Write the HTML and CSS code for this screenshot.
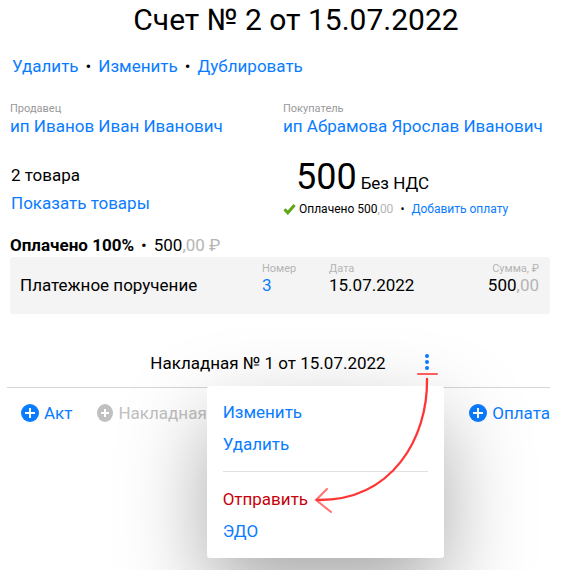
FILE: index.html
```
<!DOCTYPE html>
<html lang="ru">
<head>
<meta charset="UTF-8">
<meta name="viewport" content="width=device-width, initial-scale=1">
<title>Счет № 2 от 15.07.2022</title>
<link rel="stylesheet" href="styles.css">
</head>
<body>

<main class="invoice">
    <h1>Счет № 2 от 15.07.2022</h1>

    <nav class="actions">
        <a href="#">Удалить</a>
        <span>•</span>
        <a href="#">Изменить</a>
        <span>•</span>
        <a href="#">Дублировать</a>
    </nav>

    <section class="columns parties">
        <div>
            <div class="label">Продавец</div>
            <a href="#">ип Иванов Иван Иванович</a>
        </div>
        <div>
            <div class="label">Покупатель</div>
            <a href="#">ип Абрамова Ярослав Иванович</a>
        </div>
    </section>

    <section class="columns summary">
        <div class="goods">
            <div>2 товара</div>
            <a href="#">Показать товары</a>
        </div>
        <div>
            <div class="total">500 <span class="vat">Без НДС</span></div>
            <div class="status">
                <svg class="check" viewBox="0 0 13 12" aria-hidden="true">
                    <path d="M1.5 6.2l3.3 3.6L11.6 2" fill="none" stroke="#5fa614" stroke-width="3"/>
                </svg>
                <span>Оплачено 500<span class="muted">,00</span></span>
                <span class="dot">•</span>
                <a href="#">Добавить оплату</a>
            </div>
        </div>
    </section>

    <!-- Payments -->
    <div class="paid">
        <b>Оплачено 100%</b>
        <span>•</span>
        <span>500<span class="muted">,00 ₽</span></span>
    </div>
    <table class="payments">
        <thead>
            <tr>
                <td></td>
                <th class="number">Номер</th>
                <th>Дата</th>
                <th class="right">Сумма, ₽</th>
            </tr>
        </thead>
        <tbody>
            <tr>
                <td>Платежное поручение</td>
                <td><a href="#">3</a></td>
                <td>15.07.2022</td>
                <td class="right">500<span class="muted">,00</span></td>
            </tr>
        </tbody>
    </table>

    <!-- Waybill with an open menu -->
    <section class="waybill">
        <div class="waybill-head">
            <span>Накладная № 1 от 15.07.2022</span>
            <div class="menu-wrap">
                <button class="kebab" type="button" aria-label="Меню" aria-expanded="true">
                    <svg viewBox="0 0 4 16"><circle cx="2" cy="2" r="2"/><circle cx="2" cy="8" r="2"/><circle cx="2" cy="14" r="2"/></svg>
                </button>
                <div class="menu">
                    <a href="#">Изменить</a>
                    <a href="#">Удалить</a>
                    <hr>
                    <a href="#" class="send">Отправить</a>
                    <a href="#">ЭДО</a>
                </div>
                <svg class="arrow" viewBox="0 0 128 144" aria-hidden="true">
                    <path d="M105 3H124" stroke-width="2" opacity=".8"/>
                    <path d="M114 8C115 66 80 130 4 129" stroke-width="2.3"/>
                    <path d="M14 118L3 129L18 141" stroke-width="2" opacity=".7"/>
                </svg>
            </div>
        </div>
        <div class="add">
            <button type="button">
                <svg class="plus" viewBox="0 0 18 18"><circle cx="9" cy="9" r="9"/><path d="M9 4v10M4 9h10"/></svg>
                Акт
            </button>
            <button type="button" disabled>
                <svg class="plus" viewBox="0 0 18 18"><ellipse cx="9" cy="9" rx="8" ry="9"/><path d="M9 5v8M5 9h8"/></svg>
                Накладная
            </button>
            <button type="button" class="last">
                <svg class="plus" viewBox="0 0 18 18"><circle cx="9" cy="9" r="9"/><path d="M9 4v10M4 9h10"/></svg>
                Оплата
            </button>
        </div>
    </section>
</main>

</body>
</html>
```
FILE: styles.css
```
:root {
    --blue: #0a7cff;
    --red: #c8000a;
    --muted: #b5b5b5;
}

* {
    margin: 0;
    padding: 0;
    box-sizing: border-box;
}

body {
    min-height: 100vh;
    background: #fff;
    color: #000;
    font-family: Roboto, "Liberation Sans", sans-serif;
    font-size: 17px;
    line-height: 20px;
}

a {
    color: var(--blue);
    text-decoration: none;
}

button {
    border: none;
    background: none;
    color: var(--blue);
    font: inherit;
    cursor: pointer;
}

.invoice {
    padding: 0 11px 0 10px;
}

h1 {
    padding-left: 32px;
    font-size: 30px;
    line-height: 40px;
    font-weight: 400;
    text-align: center;
}

.actions {
    display: flex;
    gap: 7px;
    margin-top: 16px;
    padding-left: 2px;
}

.columns {
    display: grid;
    grid-template-columns: 1fr 1fr;
    column-gap: 6px;
}

.parties {
    margin-top: 26px;
    white-space: nowrap;
}

.label {
    color: #999;
    font-size: 11px;
    line-height: 14px;
}

.summary {
    margin-top: 20px;
}

.goods {
    display: flex;
    flex-direction: column;
    gap: 8px;
    padding: 9px 0 0 1px;
}

.total {
    padding-left: 13px;
    font-size: 36px;
    line-height: 42px;
}

.vat {
    margin-left: -5px;
    font-size: 17px;
    line-height: 20px;
}

.status {
    display: flex;
    align-items: center;
    gap: 3px;
    margin-top: 1px;
    font-size: 12px;
}

.status .dot {
    margin: 0 4px;
}

.check {
    width: 13px;
    height: 12px;
}

.muted {
    color: var(--muted);
}

.paid {
    display: flex;
    gap: 7px;
    margin-top: 16px;
    padding-bottom: 2px;
}

.payments {
    width: 100%;
    table-layout: fixed;
    border-collapse: collapse;
    border-radius: 3px;
    background: #f4f4f4;
}

.payments th {
    padding-top: 5px;
    color: var(--muted);
    font-size: 11px;
    line-height: 13px;
    font-weight: 400;
    text-align: left;
}

.payments tbody td {
    padding-bottom: 19px;
}

.payments td:first-child {
    width: 252px;
    padding-left: 10px;
}

.payments .number {
    width: 67px;
}

.payments .right {
    padding-right: 11px;
    text-align: right;
}

.waybill {
    margin: 39px 0 0 -3px;
}

.waybill-head {
    display: flex;
    align-items: center;
    justify-content: center;
    gap: 39px;
    padding: 0 0 14px 22px;
    border-bottom: 1px solid #d5d5d5;
}

.menu-wrap {
    position: relative;
}

.kebab {
    display: block;
    padding: 0 0 2px;
}

.kebab svg {
    display: block;
    width: 4px;
    height: 16px;
    fill: var(--blue);
}

.menu {
    position: absolute;
    top: 32px;
    right: -15px;
    width: 237px;
    padding: 16px 16px 17px;
    border-radius: 3px;
    background: #fff;
    box-shadow: 0 35px 85px rgba(0, 0, 0, 0.34);
}

.menu a {
    display: block;
    padding: 0 0 12px;
}

.menu hr {
    margin: 5px 0 17px;
    border: none;
    border-top: 1px solid #e0e0e0;
}

.menu a:last-child {
    padding: 0;
}

.menu .send {
    color: var(--red);
}

.arrow {
    position: absolute;
    top: 17px;
    right: -12px;
    width: 128px;
    height: 144px;
    fill: none;
    stroke: #ff3535;
    stroke-linecap: round;
    pointer-events: none;
}

.add {
    display: flex;
    gap: 24px;
    padding: 15px 0 0 14px;
}

.add button {
    display: flex;
    align-items: center;
    gap: 5px;
}

.add button:disabled {
    gap: 4px;
    color: #c0c0c0;
    cursor: default;
}

.add .last {
    margin-left: auto;
}

.plus {
    width: 18px;
    height: 18px;
    fill: currentColor;
}

.plus path {
    stroke: #fff;
    stroke-width: 2;
}
```
